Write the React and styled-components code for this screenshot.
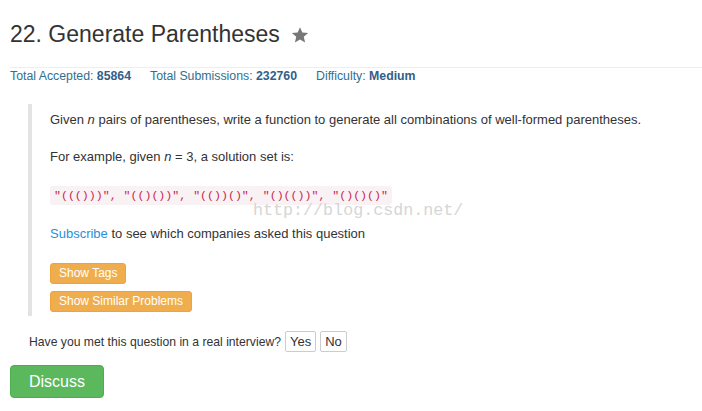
import React from "react";
import styled, { createGlobalStyle } from "styled-components";

const Global = createGlobalStyle`
  html, body { margin: 0; padding: 0; background: #fff; }
  body { font-family: "Liberation Sans", Arial, sans-serif; color: #333; font-size: 13px; }
`;

const Page = styled.div`
  padding: 0 0 0 10px;
`;

const Header = styled.div`
  display: flex;
  align-items: center;
  padding-top: 21px;
  padding-bottom: 19px;
  border-bottom: 1px solid #eee;
`;

const Title = styled.h1`
  margin: 0;
  font-size: 23px;
  font-weight: normal;
  line-height: 27px;
  color: #333;
`;

const Star = styled.svg`
  width: 18px;
  height: 18px;
  margin-left: 11px;
  margin-top: 1px;
  fill: #777;
`;

const Stats = styled.div`
  display: flex;
  gap: 19px;
  font-size: 12.3px;
  line-height: 17px;
  color: #31708f;
`;

const Stat = styled.span`
  b { font-weight: bold; color: #31608a; }
`;

const Quote = styled.div`
  position: relative;
  margin: 19px 0 0 18px;
  padding: 6px 0 4px 18px;
  border-left: 4px solid #e3e3e3;
`;

const P = styled.p`
  margin: 0 0 ${(p) => p.$mb ?? 17}px 0;
  line-height: 20px;
  font-size: 13px;
`;

const Code = styled.code`
  font-family: "Liberation Mono", "Courier New", monospace;
  font-size: 11.6px;
  color: #c7254e;
  background: #f9f2f4;
  padding: 3px 4px;
  border-radius: 3px;
`;

const Watermark = styled.div`
  position: absolute;
  left: 221px;
  top: 97px;
  font-family: "Liberation Mono", "Courier New", monospace;
  font-size: 16.7px;
  color: #d6d6d6;
  pointer-events: none;
`;

const Link = styled.a`
  color: #2a8fd8;
  text-decoration: none;
`;

const Buttons = styled.div`
  display: flex;
  flex-direction: column;
  align-items: flex-start;
  gap: 7px;
  margin-top: 1px;
`;

const Orange = styled.button`
  font-family: "Liberation Sans", Arial, sans-serif;
  font-size: 12px;
  line-height: 17px;
  color: #fff;
  background: #f0ad4e;
  border: 1px solid #eea43e;
  border-radius: 3px;
  padding: 1px 8px;
  cursor: pointer;
`;

const Interview = styled.div`
  display: flex;
  align-items: center;
  gap: 4px;
  margin: 15px 0 0 19px;
  font-size: 12.2px;
`;

const Small = styled.button`
  font-family: "Liberation Sans", Arial, sans-serif;
  font-size: 13px;
  line-height: 15px;
  color: #333;
  background: #fff;
  border: 1px solid #ccc;
  border-radius: 2px;
  padding: 2px 4px;
  height: 21px;
  cursor: pointer;
`;

const Discuss = styled.button`
  margin-top: 13px;
  height: 33px;
  padding: 0 18px;
  font-family: "Liberation Sans", Arial, sans-serif;
  font-size: 16px;
  color: #fff;
  background: #5cb85c;
  border: 1px solid #4cae4c;
  border-radius: 4px;
  cursor: pointer;
`;

export default function App() {
  return (
    <>
      <Global />
      <Page>
        <Header>
          <Title>22. Generate Parentheses</Title>
          <Star viewBox="0 0 24 24">
            <path d="M12 1.5l3.1 7.2 7.8.6-5.9 5.1 1.8 7.6L12 17.9l-6.8 4.1 1.8-7.6-5.9-5.1 7.8-.6z" />
          </Star>
        </Header>
        <Stats>
          <Stat>Total Accepted: <b>85864</b></Stat>
          <Stat>Total Submissions: <b>232760</b></Stat>
          <Stat>Difficulty: <b>Medium</b></Stat>
        </Stats>
        <Quote>
          <P>
            Given <i>n</i> pairs of parentheses, write a function to generate all combinations of well-formed parentheses.
          </P>
          <P $mb={18}>
            For example, given <i>n</i> = 3, a solution set is:
          </P>
          <P $mb={18}>
            <Code>"((()))", "(()())", "(())()", "()(())", "()()()"</Code>
          </P>
          <Watermark>http://blog.csdn.net/</Watermark>
          <P $mb={19}>
            <Link href="#">Subscribe</Link> to see which companies asked this question
          </P>
          <Buttons>
            <Orange>Show Tags</Orange>
            <Orange>Show Similar Problems</Orange>
          </Buttons>
        </Quote>
        <Interview>
          <span>Have you met this question in a real interview?</span>
          <Small>Yes</Small>
          <Small>No</Small>
        </Interview>
        <Discuss>Discuss</Discuss>
      </Page>
    </>
  );
}
